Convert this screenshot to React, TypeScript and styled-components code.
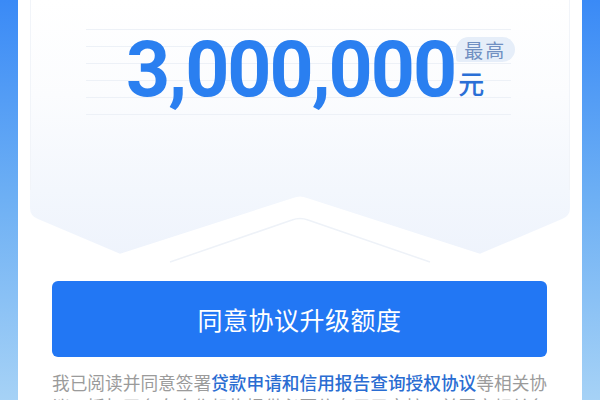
import styled, { createGlobalStyle } from 'styled-components'

const GlobalStyle = createGlobalStyle`
  html, body {
    margin: 0;
    padding: 0;
    background: #ffffff;
  }
  * {
    box-sizing: border-box;
  }
`

const Page = styled.div`
  width: 600px;
  height: 400px;
  overflow: hidden;
  padding: 0 18px;
  background: linear-gradient(to bottom, #3a8af6 0%, #6eb0f4 50%, #a6d2f6 100%);
  font-family: 'Noto Sans CJK SC', 'Noto Sans', sans-serif;
`

const Card = styled.div`
  height: 100%;
  background: #ffffff;
  padding: 0 12px;
  display: flex;
  flex-direction: column;

  & > * {
    flex-shrink: 0;
  }
`

const Panel = styled.div`
  height: 190px;
  background: linear-gradient(to bottom, #ffffff 0%, #fbfcfe 50%, #f3f7fd 100%);
  border-left: 1px solid #f1f4f9;
  border-right: 1px solid #f1f4f9;
  padding-top: 13px;
`

const LinesBox = styled.div`
  margin: 0 58px 0 55px;
  height: 102px;
  padding-left: 40px;
  display: flex;
  align-items: flex-start;
  background: repeating-linear-gradient(
    to bottom,
    transparent 0px,
    transparent 16px,
    #edf1f7 16px,
    #edf1f7 17px
  );
`

const AmountRow = styled.div`
  display: flex;
  align-items: flex-start;
  gap: 1px;
`

const Amount = styled.span`
  font-family: Roboto, 'Liberation Sans', sans-serif;
  font-weight: 700;
  font-size: 77px;
  line-height: 1;
  letter-spacing: -2px;
  color: #2a7ff0;
  margin-top: 19px;
  white-space: nowrap;
`

const UnitColumn = styled.div`
  display: flex;
  flex-direction: column;
  align-items: flex-start;
  gap: 6px;
  padding-top: 24px;
  flex-shrink: 0;
`

const Badge = styled.span`
  height: 25px;
  padding: 0 9px 0 8px;
  border-radius: 13px 13px 13px 4px;
  background: #e6eef9;
  color: #7190c2;
  font-size: 19px;
  line-height: 25px;
  letter-spacing: 2px;
  white-space: nowrap;
`

const Unit = styled.span`
  margin-left: 2px;
  font-size: 26px;
  line-height: 30px;
  color: #2a6fd6;
  font-weight: 500;
`

const Fold = styled.svg`
  display: block;
  width: 540px;
  height: 90px;
`

const ButtonWrap = styled.div`
  padding: 1px 23px 0 22px;
`

const PrimaryButton = styled.button`
  width: 100%;
  height: 76px;
  border: none;
  border-radius: 6px;
  background: #2277f4;
  color: #ffffff;
  font-family: 'Noto Sans CJK SC', 'Noto Sans', sans-serif;
  font-size: 25px;
  letter-spacing: 0.5px;
  cursor: pointer;
`

const Agreement = styled.p`
  margin: 13px 23px 0 22px;
  font-size: 17.68px;
  line-height: 24px;
  color: #9b9b9b;
  text-align: justify;
`

const Link = styled.span`
  color: #2a6dd2;
  font-weight: 500;
`

function App() {
  return (
    <>
      <GlobalStyle />
      <Page>
        <Card>
          <Panel>
            <LinesBox>
              <AmountRow>
                <Amount>3,000,000</Amount>
                <UnitColumn>
                  <Badge>最高</Badge>
                  <Unit>元</Unit>
                </UnitColumn>
              </AmountRow>
            </LinesBox>
          </Panel>
          <Fold viewBox="0 0 540 90">
            <defs>
              <linearGradient id="shade" x1="0" y1="0" x2="0" y2="1">
                <stop offset="0" stopColor="#f3f7fd" />
                <stop offset="1" stopColor="#e9effb" />
              </linearGradient>
            </defs>
            <path
              d="M0,0 H540 V18 Q540,26 532,29 L270,140 L8,29 Q0,26 0,18 Z"
              fill="url(#shade)"
            />
            <path
              d="M-10,96 L263,8 Q270,5 277,8 L550,96 Z"
              fill="#ffffff"
            />
            <path
              d="M140,72 L262,30 Q270,27 278,30 L400,72"
              fill="none"
              stroke="#eef2f8"
              strokeWidth="1.5"
            />
          </Fold>
          <ButtonWrap>
            <PrimaryButton>同意协议升级额度</PrimaryButton>
          </ButtonWrap>
          <Agreement>
            我已阅读并同意签署<Link>贷款申请和信用报告查询授权协议</Link>
            等相关协议，授权平台向合作机构提供必要信息用于审核，并同意相关条款
          </Agreement>
        </Card>
      </Page>
    </>
  )
}

export default App
